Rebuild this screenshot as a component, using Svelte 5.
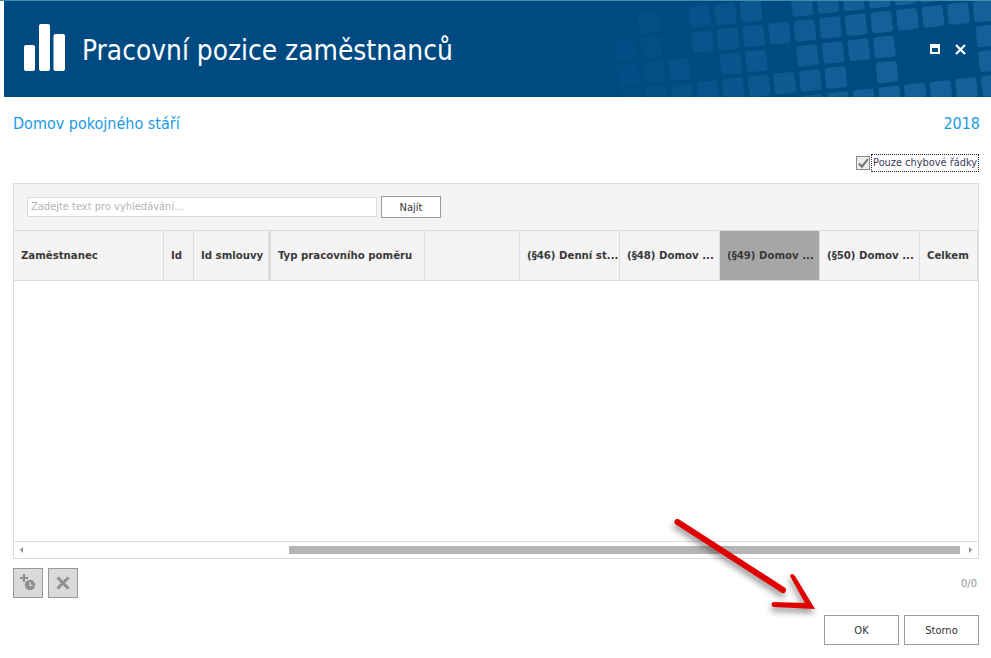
<script lang="ts">
	const columns = [
		{ label: 'Zaměstnanec', width: 150 },
		{ label: 'Id', width: 30 },
		{ label: 'Id smlouvy', width: 77, frozen: true },
		{ label: 'Typ pracovního poměru', width: 154 },
		{ label: '', width: 95 },
		{ label: '(§46) Denní st...', width: 100 },
		{ label: '(§48) Domov ...', width: 100 },
		{ label: '(§49) Domov ...', width: 100, active: true },
		{ label: '(§50) Domov ...', width: 100 },
		{ label: 'Celkem', width: 58 }
	];

	// decorative tiles in the title bar: [row, first column, last column]
	const tileRows = [
		[0, -6, -6],
		[0, -4, -4],
		[0, -2, 0],
		[0, 2, 9],
		[1, -5, -4],
		[1, -2, 9],
		[2, -5, -3],
		[2, -1, 0],
		[2, 2, 5],
		[2, 9, 9],
		[3, -5, 3],
		[3, 5, 5],
		[3, 9, 9],
		[4, 2, 9]
	];

	const tiles = tileRows.flatMap(([j, from, to]) => {
		const list = [];
		for (let i = from; i <= to; i++) {
			const x = 751 + 25.6 * i + 2.7 * j;
			const y = 11 - 2.8 * i + 25 * j;
			const opacity = Math.max(0.01, Math.min(0.22, (0.22 * (x - 590)) / 290));
			list.push({ x, y, opacity });
		}
		return list;
	});
</script>

<div class="window">
	<header class="title-bar">
		<svg class="tiles" width="987" height="96" viewBox="4 1 987 96" aria-hidden="true">
			{#each tiles as t}
				<rect
					x={t.x - 10.5}
					y={t.y - 10.5}
					width="21"
					height="21"
					rx="3"
					fill="#5db4ee"
					opacity={t.opacity}
					transform="rotate(-6 {t.x} {t.y})"
				/>
			{/each}
		</svg>
		<svg class="logo" width="42" height="47" viewBox="0 0 42 47" aria-hidden="true">
			<rect x="0" y="21" width="11" height="26" rx="2" fill="#fff" />
			<rect x="15" y="0" width="11" height="47" rx="2" fill="#fff" />
			<rect x="29.5" y="10" width="11.5" height="37" rx="2" fill="#fff" />
		</svg>
		<h1>Pracovní pozice zaměstnanců</h1>
		<div class="window-buttons">
			<svg width="10" height="10" viewBox="0 0 10 10" aria-hidden="true">
				<path fill="#fff" fill-rule="evenodd" d="M0 0h10v10H0zM2 4v4h6V4z" />
			</svg>
			<svg width="11" height="11" viewBox="0 0 11 11" aria-hidden="true">
				<path stroke="#fff" stroke-width="2.2" d="M1 1l9 9M10 1l-9 9" />
			</svg>
		</div>
	</header>

	<div class="context">
		<span>Domov pokojného stáří</span>
		<span>2018</span>
	</div>

	<div class="filter">
		<span class="checkbox">
			<svg width="11" height="11" viewBox="0 0 11 11" aria-hidden="true">
				<path fill="none" stroke="#6f6f6f" stroke-width="2" d="M1 5.5l3 3.2L10 1" />
			</svg>
		</span>
		<span class="filter-label">Pouze chybové řádky</span>
	</div>

	<section class="panel">
		<div class="search">
			<div class="search-input">Zadejte text pro vyhledávání...</div>
			<button class="btn find">Najít</button>
		</div>
		<div class="grid-head">
			{#each columns as col}
				<div class="cell" class:frozen={col.frozen} class:active={col.active} style="width: {col.width}px">
					{col.label}
				</div>
			{/each}
		</div>
		<div class="grid-body"></div>
		<div class="scrollbar">
			<span class="arrow left"></span>
			<div class="track"><div class="thumb"></div></div>
			<span class="arrow right"></span>
		</div>
	</section>

	<div class="tools">
		<button class="tool" aria-label="Přidat">
			<svg width="20" height="20" viewBox="0 0 20 20" aria-hidden="true">
				<path stroke="#8f8f8f" stroke-width="2" d="M6 1v8M2 5h8" />
				<circle cx="12" cy="12" r="5.2" fill="#8f8f8f" />
				<path fill="none" stroke="#dadada" stroke-width="1.2" d="M12 9v3.4h2.6" />
			</svg>
		</button>
		<button class="tool" aria-label="Smazat">
			<svg width="14" height="14" viewBox="0 0 14 14" aria-hidden="true">
				<path stroke="#8f8f8f" stroke-width="3" d="M1.5 1.5l11 11M12.5 1.5l-11 11" />
			</svg>
		</button>
		<span class="count">0/0</span>
	</div>

	<div class="actions">
		<button class="btn action">OK</button>
		<button class="btn action">Storno</button>
	</div>

	<svg class="annotation" width="991" height="658" viewBox="0 0 991 658" aria-hidden="true">
		<g class="arrow-mark">
			<path d="M677.5 522 L783 590" stroke="#e00000" stroke-width="6" stroke-linecap="round" fill="none" />
			<path d="M790 576 Q792 572 795 576 L815 609 L773 607 Q770 604 773 602 L805 603 Z" fill="#e00000" />
		</g>
	</svg>
</div>

<style>
	:global(body) {
		margin: 0;
		background: #fff;
	}

	.window {
		position: relative;
		width: 991px;
		height: 658px;
		box-sizing: border-box;
		border-top: 1px solid #3a90a8;
		overflow: hidden;
		font-family: "DejaVu Sans", sans-serif;
		font-stretch: condensed;
		color: #333;
	}

	.title-bar {
		position: relative;
		display: flex;
		align-items: center;
		height: 96px;
		margin-left: 4px;
		padding-left: 20px;
		background: #004a82;
		color: #fff;
	}

	.tiles {
		position: absolute;
		left: 0;
		top: 0;
	}

	.logo {
		position: relative;
		flex: none;
		margin-top: -3px;
	}

	h1 {
		position: relative;
		margin: 2px 0 0 16px;
		font-size: 27.8px;
		font-weight: 400;
	}

	.window-buttons {
		position: absolute;
		top: 43px;
		right: 25px;
		display: flex;
		gap: 15px;
	}

	.context {
		display: flex;
		justify-content: space-between;
		padding: 17px 11px 0 13px;
		font-size: 16px;
		line-height: 20px;
		color: #1b9ae6;
	}

	.filter {
		display: flex;
		align-items: center;
		justify-content: flex-end;
		margin-top: 20px;
		padding-right: 13px;
		font-size: 10.9px;
		height: 18px;
	}

	.checkbox {
		display: flex;
		align-items: center;
		justify-content: center;
		box-sizing: border-box;
		width: 14px;
		height: 14px;
		border: 1px solid #8a8a8a;
		background: #ececec;
		margin-right: 2px;
	}

	.filter-label {
		outline: 1px dotted #222;
		line-height: 16px;
		padding: 0 1px;
		color: #3b3b5c;
	}

	.panel {
		display: flex;
		flex-direction: column;
		box-sizing: border-box;
		height: 376px;
		margin: 11px 12px 0 13px;
		border: 1px solid #dcdcdc;
	}

	.search {
		display: flex;
		align-items: center;
		gap: 4px;
		height: 47px;
		flex: none;
		padding-left: 13px;
		background: #f4f4f4;
		border-bottom: 1px solid #dcdcdc;
		box-sizing: border-box;
	}

	.search-input {
		box-sizing: border-box;
		width: 350px;
		height: 20px;
		padding-left: 3px;
		background: #fff;
		border: 1px solid #dcdcdc;
		font-size: 11px;
		line-height: 18px;
		color: #b4b4b4;
	}

	.btn {
		box-sizing: border-box;
		padding: 0;
		background: #fff;
		border: 1px solid #999;
		border-radius: 0;
		font-family: inherit;
		font-stretch: inherit;
		font-size: 11px;
		color: #333;
	}

	.find {
		width: 60px;
		height: 22px;
		margin-bottom: 0;
	}

	.grid-head {
		display: flex;
		flex: none;
		height: 50px;
		box-sizing: border-box;
		background: #f4f4f4;
		border-bottom: 1px solid #dcdcdc;
	}

	.cell {
		box-sizing: border-box;
		flex: none;
		padding-left: 7px;
		border-right: 1px solid #dcdcdc;
		font-size: 11.3px;
		font-weight: 700;
		line-height: 49px;
		white-space: nowrap;
		overflow: hidden;
		color: #3a3a3a;
	}

	.cell.frozen {
		border-right-width: 3px;
	}

	.cell.active {
		background: #a6a6a6;
	}

	.grid-body {
		flex: 1;
		background: #fff;
	}

	.scrollbar {
		display: flex;
		align-items: center;
		flex: none;
		height: 17px;
		box-sizing: border-box;
		padding: 0 6px;
		border-top: 1px solid #dcdcdc;
	}

	.track {
		flex: 1;
		height: 8px;
		margin: 0 5px 0 5px;
	}

	.thumb {
		width: 671px;
		height: 8px;
		margin-left: 261px;
		background: #b5b5b5;
	}

	.arrow {
		width: 0;
		height: 0;
		border-top: 3px solid transparent;
		border-bottom: 3px solid transparent;
	}

	.arrow.left {
		border-right: 3px solid #8c8c8c;
	}

	.arrow.right {
		border-left: 3px solid #8c8c8c;
	}

	.tools {
		display: flex;
		align-items: center;
		gap: 5px;
		margin: 9px 14px 0 13px;
	}

	.tool {
		display: flex;
		align-items: center;
		justify-content: center;
		box-sizing: border-box;
		width: 30px;
		height: 30px;
		padding: 0;
		background: #dadada;
		border: 1px solid #999;
		border-radius: 0;
	}

	.count {
		margin-left: auto;
		margin-top: 1px;
		font-size: 11px;
		color: #8b9490;
	}

	.actions {
		display: flex;
		justify-content: flex-end;
		gap: 5px;
		margin: 17px 12px 0 0;
	}

	.action {
		width: 75px;
		height: 30px;
	}

	.annotation {
		position: absolute;
		left: 0;
		top: -1px;
		pointer-events: none;
	}

	.arrow-mark {
		filter: drop-shadow(-1px 4px 3px rgba(0, 0, 0, 0.45));
	}
</style>
